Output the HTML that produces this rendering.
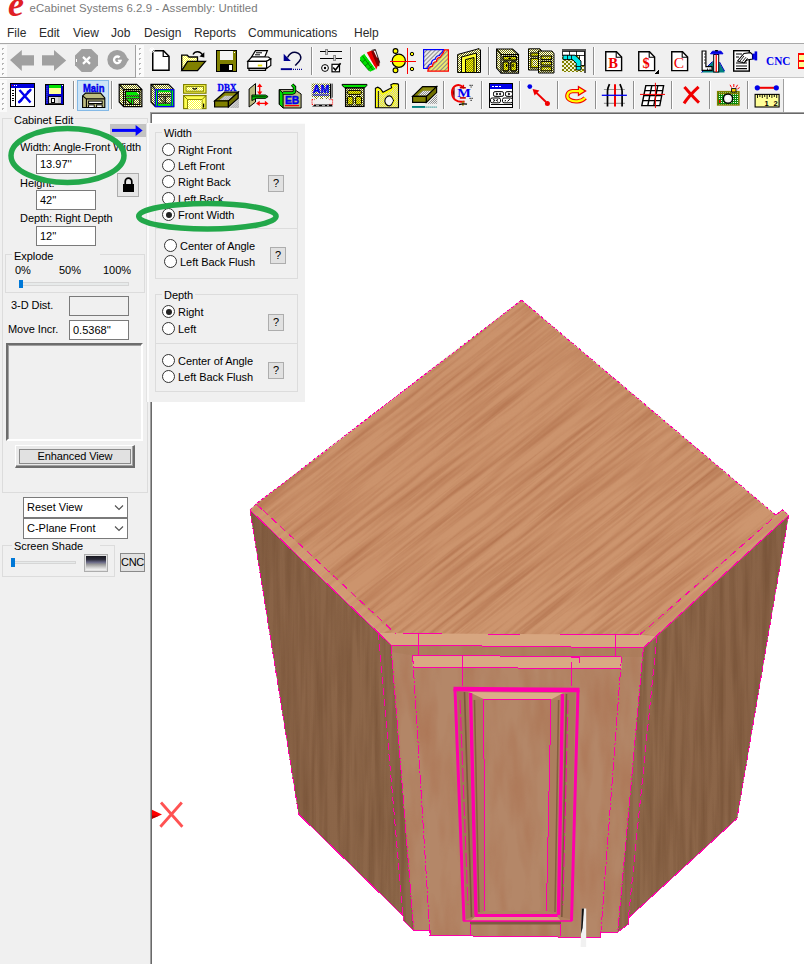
<!DOCTYPE html>
<html><head><meta charset="utf-8">
<style>
*{box-sizing:border-box;margin:0;padding:0}
html,body{width:804px;height:964px;overflow:hidden;background:#fff}
body{position:relative;font-family:"Liberation Sans",sans-serif;font-size:11px;color:#000}
.a{position:absolute}
.t{position:absolute;white-space:nowrap;line-height:14px;font-size:11px;letter-spacing:-0.05px}
.menu{position:absolute;top:25px;font-size:12px;line-height:16px;color:#2b2b2b;white-space:nowrap}
.inp{position:absolute;background:#fff;border:1px solid #7a7a7a;font-size:11px;line-height:19px;padding-left:3px;white-space:nowrap}
.gb{position:absolute;border:1px solid #dcdcdc}
.gl{position:absolute;background:#f0f0f0;padding:0 2px;white-space:nowrap;line-height:14px;font-size:11px;letter-spacing:-0.05px}
.rb{position:absolute;width:13px;height:13px;border:1px solid #333;border-radius:50%;background:#fff}
.rb.on::after{content:"";position:absolute;left:2.5px;top:2.5px;width:6px;height:6px;border-radius:50%;background:#222}
.q{position:absolute;width:16px;height:17px;background:#e1e1e1;border:1px solid #adadad;text-align:center;font-size:11px;line-height:15px}
.sep{position:absolute;width:1px;background:#a0a0a0;border-right:1px solid #fff;width:2px}
.grip{position:absolute;width:3px;border-left:1px dotted #b0b0b0;border-right:1px dotted #fff}
</style></head><body>

<!-- title bar -->
<div class="a" style="left:8px;top:-14px;font-family:'Liberation Serif',serif;font-style:italic;font-weight:bold;font-size:36px;line-height:36px;color:#e01f26">e</div>
<div class="a" style="left:29.5px;top:1px;font-size:11.4px;letter-spacing:0.08px;line-height:15px;color:#7a7a7a;white-space:nowrap">eCabinet Systems 6.2.9 - Assembly: Untitled</div>

<!-- menu -->
<div class="menu" style="left:7px">File</div>
<div class="menu" style="left:39px">Edit</div>
<div class="menu" style="left:73px">View</div>
<div class="menu" style="left:111px">Job</div>
<div class="menu" style="left:144px">Design</div>
<div class="menu" style="left:194px">Reports</div>
<div class="menu" style="left:248px">Communications</div>
<div class="menu" style="left:354px">Help</div>

<!-- toolbars bg -->
<div class="a" id="tb1" style="left:0;top:43px;width:804px;height:35px;background:#f0f0f0;border-top:1px solid #a9a9a9"></div>
<div class="a" id="tb2" style="left:0;top:78px;width:783px;height:35px;background:#f0f0f0;border-top:1px solid #fff"></div>
<div class="a" style="left:0;top:77px;width:804px;height:1px;background:#c6c6c6"></div><div class="a" style="left:0;top:77px;width:136px;height:1px;background:#a0a0a0"></div>

<!-- left panel bg -->
<div class="a" style="left:0;top:112px;width:150px;height:852px;background:#f0f0f0"></div>
<div class="a" style="left:150px;top:112px;width:1px;height:852px;background:#a0a0a0"></div><div class="a" style="left:151px;top:113px;width:1px;height:851px;background:#696969"></div>
<div class="a" style="left:150px;top:112px;width:654px;height:1px;background:#a0a0a0"></div><div class="a" style="left:151px;top:113px;width:653px;height:1px;background:#696969"></div>

<!--ICONS-->
<svg class="a" style="left:0;top:43px" width="804" height="71" viewBox="0 43 804 71" shape-rendering="crispEdges">
<defs>
<pattern id="pY" width="2" height="2" patternUnits="userSpaceOnUse"><rect width="2" height="2" fill="#ffff4d"/><rect width="1" height="1" fill="#55550a"/><rect x="1" y="1" width="1" height="1" fill="#55550a"/></pattern>
<pattern id="pYl" width="2" height="2" patternUnits="userSpaceOnUse"><rect width="2" height="2" fill="#ffff30"/><rect width="1" height="1" fill="#fff"/><rect x="1" y="1" width="1" height="1" fill="#fff"/></pattern>
<pattern id="pYg" width="2" height="2" patternUnits="userSpaceOnUse"><rect width="2" height="2" fill="#ffff00"/><rect width="1" height="1" fill="#d0d0d0"/><rect x="1" y="1" width="1" height="1" fill="#d0d0d0"/></pattern>
<pattern id="pYd" width="2" height="2" patternUnits="userSpaceOnUse"><rect width="2" height="2" fill="#ffff00"/><rect width="1" height="1" fill="#808000"/><rect x="1" y="1" width="1" height="1" fill="#808000"/></pattern>
<pattern id="pG" width="2" height="2" patternUnits="userSpaceOnUse"><rect width="2" height="2" fill="#f0f0f0"/><rect width="1" height="1" fill="#909090"/><rect x="1" y="1" width="1" height="1" fill="#909090"/></pattern>
<pattern id="pB" width="2" height="2" patternUnits="userSpaceOnUse"><rect width="2" height="2" fill="#0000c8"/><rect width="1" height="1" fill="#7a7aff"/></pattern>
<pattern id="pK" width="2" height="2" patternUnits="userSpaceOnUse"><rect width="2" height="2" fill="#ffffff"/><rect width="1" height="1" fill="#787800"/><rect x="1" y="1" width="1" height="1" fill="#787800"/></pattern>
<pattern id="pH" width="3" height="3" patternUnits="userSpaceOnUse" patternTransform="rotate(-45)"><rect width="3" height="3" fill="#e8e8e8"/><rect width="3" height="1" fill="#8a8a8a"/></pattern>
<pattern id="pHy" width="3" height="3" patternUnits="userSpaceOnUse" patternTransform="rotate(-45)"><rect width="3" height="3" fill="#eaea70"/><rect width="3" height="1" fill="#8a8a8a"/></pattern>
<pattern id="pCk" width="4" height="4" patternUnits="userSpaceOnUse"><rect width="4" height="4" fill="#f4f4d8"/><rect width="2" height="2" fill="#808000"/><rect x="2" y="2" width="2" height="2" fill="#808000"/></pattern>
<pattern id="pGr" width="2" height="2" patternUnits="userSpaceOnUse"><rect width="2" height="2" fill="#0a8a0a"/><rect width="1" height="1" fill="#e8ffe8"/></pattern>
</defs>
<rect x="0" y="45" width="7" height="32" fill="#fafafa"/><rect x="2" y="48" width="2" height="2" fill="#b4b4b4"/><rect x="3" y="49" width="1" height="1" fill="#fff"/><rect x="2" y="53" width="2" height="2" fill="#b4b4b4"/><rect x="3" y="54" width="1" height="1" fill="#fff"/><rect x="2" y="58" width="2" height="2" fill="#b4b4b4"/><rect x="3" y="59" width="1" height="1" fill="#fff"/><rect x="2" y="63" width="2" height="2" fill="#b4b4b4"/><rect x="3" y="64" width="1" height="1" fill="#fff"/><rect x="2" y="68" width="2" height="2" fill="#b4b4b4"/><rect x="3" y="69" width="1" height="1" fill="#fff"/><rect x="2" y="73" width="2" height="2" fill="#b4b4b4"/><rect x="3" y="74" width="1" height="1" fill="#fff"/>
<g transform="translate(10,50)"><polygon points="0,10 11.8,0 11.8,5.2 24,5.2 24,15.6 11.8,15.6 11.8,20.9" fill="#a0a0a0" shape-rendering="auto"/></g>
<g transform="translate(42,50)"><polygon points="0,5.2 12,5.2 12,0 24.2,10.4 12,20.9 12,15.6 0,15.6" fill="#a0a0a0" shape-rendering="auto"/></g>
<g transform="translate(86.5,60.4)"><polygon points="-4.8,-11.5 4.8,-11.5 11.5,-4.8 11.5,4.8 4.8,11.5 -4.8,11.5 -11.5,4.8 -11.5,-4.8" fill="#a0a0a0" shape-rendering="auto"/><path d="M-3.5,-3.5L3.5,3.5M3.5,-3.5L-3.5,3.5" stroke="#fff" stroke-width="2.2" shape-rendering="auto"/><rect x="-10.5" y="-1" width="1" height="3" fill="#fff"/></g>
<g transform="translate(117.2,59.8)"><g shape-rendering="auto"><circle r="9.9" fill="#a0a0a0"/><polygon points="5,-7 11.8,-0.4 5.6,8" fill="#a0a0a0"/><path d="M2.4,-2.4A3.3,3.3 0 1 0 3.2,1.2" stroke="#fff" stroke-width="2.3" fill="none"/><path d="M0.6,0.6H4.6" stroke="#fff" stroke-width="1.5"/></g></g>
<rect x="136" y="45" width="8" height="32" fill="#fbfbfb"/><rect x="135" y="45" width="1" height="32" fill="#a0a0a0"/><rect x="139" y="48" width="2" height="2" fill="#b4b4b4"/><rect x="140" y="49" width="1" height="1" fill="#fff"/><rect x="139" y="53" width="2" height="2" fill="#b4b4b4"/><rect x="140" y="54" width="1" height="1" fill="#fff"/><rect x="139" y="58" width="2" height="2" fill="#b4b4b4"/><rect x="140" y="59" width="1" height="1" fill="#fff"/><rect x="139" y="63" width="2" height="2" fill="#b4b4b4"/><rect x="140" y="64" width="1" height="1" fill="#fff"/><rect x="139" y="68" width="2" height="2" fill="#b4b4b4"/><rect x="140" y="69" width="1" height="1" fill="#fff"/><rect x="139" y="73" width="2" height="2" fill="#b4b4b4"/><rect x="140" y="74" width="1" height="1" fill="#fff"/>
<g transform="translate(152,50)"><path d="M0.75,0.75H11.5L17,6.2V20.2H0.75Z" fill="#fff" stroke="#000" stroke-width="1.5" shape-rendering="auto"/><path d="M11.2,1V6.5H16.8" fill="none" stroke="#000" stroke-width="1.2" shape-rendering="auto"/><path d="M-3,0H3M0,-3V3M-2,-2L2,2M-2,2L2,-2" stroke="#fff" stroke-width="1" shape-rendering="auto"/></g>
<g transform="translate(181,50)"><g shape-rendering="auto"><path d="M0.7,20.5V5.2H6.2L8,7H16.5V11.3" fill="url(#pYl)" stroke="#000" stroke-width="1.3"/><polygon points="0.7,20.6 6.6,11.3 24.4,11.3 16.5,20.6" fill="#808000" stroke="#000" stroke-width="1.3"/><path d="M12,4.5C14,0.8 19,0.5 21.8,5.2" fill="none" stroke="#000" stroke-width="1.4"/><polygon points="23.3,2.3 23.3,7.6 18.4,6.6" fill="#000"/></g></g>
<g transform="translate(216,50)"><rect x="0.5" y="0.5" width="19.5" height="20.5" fill="#808000" stroke="#000" stroke-width="1"/><rect x="4" y="1" width="12.5" height="9" fill="#f4f4f4"/><rect x="4.3" y="14" width="12.2" height="6.6" fill="#000"/><rect x="13" y="14.6" width="2.6" height="5" fill="#fff"/><rect x="18" y="1.5" width="1.2" height="1.5" fill="#fff"/></g>
<g transform="translate(247,50)"><g shape-rendering="auto" stroke="#000" stroke-width="1.2"><polygon points="8.5,0.6 20.4,0.6 17.8,7 4.6,7" fill="#fff"/><path d="M9,2.8H15M8,4.8H13" stroke-width="1"/><polygon points="0.8,11.3 4.6,7 21.5,7 23.8,9 19.6,11.3" fill="#fff"/><polygon points="0.8,11.3 19.6,11.3 19.6,18.4 0.8,18.4" fill="#fff"/><polygon points="19.6,11.3 23.8,9 23.8,15.5 19.6,18.4" fill="#fff"/><polygon points="2,18.4 18.5,18.4 18.5,20.4 2,20.4" fill="#fff"/><rect x="10.8" y="14.6" width="4.4" height="1.8" fill="#e8e000" stroke="none"/></g></g>
<g transform="translate(276,46)"><g shape-rendering="auto"><polygon points="7.7,7.8 7.7,15 14.8,15" fill="#000090"/><path d="M11.5,11.5C13.5,7.5 17,5.8 20.2,6.4C23.6,7.2 25.4,10 24.6,13C23.6,15.4 21,17.6 19.2,19.6" fill="none" stroke="#00003c" stroke-width="1.5"/><rect x="4.8" y="22.2" width="11.3" height="1.9" fill="#000090"/><path d="M17,23.4H26" stroke="#000090" stroke-width="1.2" stroke-dasharray="1 1"/></g></g>
<rect x="311" y="47" width="1" height="28" fill="#8f8f8f"/><rect x="312" y="47" width="1" height="28" fill="#fff"/>
<g transform="translate(320,49)"><rect x="0" y="2" width="22" height="1" fill="#000"/><rect x="0" y="8.5" width="22" height="1" fill="#000"/><rect x="5.5" y="0" width="2" height="5.4" fill="#d0d0d0" stroke="#555" stroke-width=".6"/><rect x="13.8" y="6" width="2" height="5.4" fill="#d0d0d0" stroke="#555" stroke-width=".6"/><g shape-rendering="auto"><circle cx="5" cy="19" r="3.4" fill="#fff" stroke="#000" stroke-width="1"/><circle cx="5" cy="19" r="1.2" fill="#000"/><rect x="12" y="15.3" width="7.5" height="7.5" fill="#fff" stroke="#000" stroke-width="1.2"/><path d="M13.2,18.6L15.4,21L20.6,14.2" stroke="#000" stroke-width="1.5" fill="none"/></g></g>
<rect x="350" y="47" width="1" height="28" fill="#8f8f8f"/><rect x="351" y="47" width="1" height="28" fill="#fff"/>
<g transform="translate(354,46)"><g shape-rendering="auto"><polygon points="6.1,11.3 10.4,7.8 21.8,23 16.1,25.7 6.1,14.4" fill="#00e000"/><path d="M8.2,9.6L19,24.3M6.1,14L15,24.8M8,16.6L11.5,13.5M11,20L15,16.6M14,23.4L18.4,19.8" stroke="#007000" stroke-width=".8"/><polygon points="12.8,6.4 17.6,4.4 24,19.4 22.2,23.4" fill="#f00000"/><polygon points="17.2,5.4 21.3,3.5 25.7,16.5 25.2,20.5 22.8,19.2" fill="#800000"/><polygon points="19.6,4.8 21.8,4.4 24,11.3 23,11.7" fill="#fff"/><path d="M11,8L21.4,22.4" stroke="#fff" stroke-width=".9"/><path d="M17.6,4.4L21.3,3.5L25.7,16.5" stroke="#000" stroke-width=".8" fill="none"/></g></g>
<g transform="translate(385,43)"><g shape-rendering="auto"><circle cx="13.8" cy="17.8" r="6.6" fill="#ffff00" stroke="#000" stroke-width="1.2"/><circle cx="10.5" cy="8" r="2.4" fill="#ffff00" stroke="#000" stroke-width="1.1"/><circle cx="10.5" cy="27.3" r="2.4" fill="#ffff00" stroke="#000" stroke-width="1.1"/><circle cx="27" cy="11" r="1.7" fill="#ffff00" stroke="#000" stroke-width="1"/><circle cx="27" cy="26" r="1.7" fill="#ffff00" stroke="#000" stroke-width="1"/></g><rect x="5" y="17.5" width="26" height="1" fill="#f00"/><rect x="22" y="5" width="1" height="26" fill="#f00"/></g>
<g transform="translate(423,49)"><g shape-rendering="auto"><path d="M0.6,0.6H20.5C20.5,4 17,4 16.5,6.5C13,6.5 12.5,9 12,10.5C9,10.5 8.5,13.5 8.5,15C5.5,15 5,18 4.5,19.5H0.6Z" fill="url(#pH)" stroke="#0000ff" stroke-width="1.2"/><path d="M25.4,0.8V22.2H4.8C5,20 6,17.5 9.5,17.2C9.5,15 10.5,12.8 13.5,12.5C13.5,10 15,8.5 17.5,8.2C17.8,5.5 20.5,5.5 21.5,0.8Z" fill="url(#pHy)" stroke="#f00" stroke-width="1.2"/></g></g>
<g transform="translate(457,48)"><g shape-rendering="auto"><polygon points="0.6,6.5 19,1.5 22,0.5 23.5,2 23.5,24.5 0.6,24.5" fill="url(#pK)" stroke="#000" stroke-width="1"/><polygon points="4.5,24.5 4.5,9 19.5,5 19.5,24.5" fill="#ffff30" stroke="#000" stroke-width="1"/><polygon points="8.5,24.5 8.5,11.6 17,9.5 17,24.5" fill="url(#pYd)" stroke="#000" stroke-width="1"/></g></g>
<rect x="488" y="47" width="1" height="28" fill="#8f8f8f"/><rect x="489" y="47" width="1" height="28" fill="#fff"/>
<g transform="translate(496,48)"><g shape-rendering="auto"><polygon points="0.6,1 16.5,1 22.5,6.5 22.5,25 5,25 0.6,20" fill="url(#pK)" stroke="#000" stroke-width="1.1"/><polygon points="5,6.5 22.5,6.5 22.5,25 5,25" fill="url(#pK)" stroke="#000" stroke-width="1.1"/><path d="M0.6,1L5,6.5" stroke="#000" stroke-width="1.1"/><rect x="7" y="8.4" width="13.6" height="3.8" rx="1" fill="url(#pYd)" stroke="#000" stroke-width="1.3"/><rect x="7" y="13.8" width="5.8" height="9.2" rx="1.2" fill="url(#pYd)" stroke="#000" stroke-width="1.3"/><rect x="14.8" y="13.8" width="5.8" height="9.2" rx="1.2" fill="url(#pYd)" stroke="#000" stroke-width="1.3"/><path d="M12.4,10.3H15.2M10.6,16V19M17,16V19" stroke="#000" stroke-width="1.2"/></g></g>
<g transform="translate(528,48)"><g shape-rendering="auto"><polygon points="0.5,0.8 12,0.8 14,3.5 14,22 0.5,22" fill="url(#pK)" stroke="#000" stroke-width="1"/><rect x="2.8" y="5" width="8.4" height="3.2" fill="url(#pYd)" stroke="#000" stroke-width="1"/><rect x="2.8" y="10.3" width="8.4" height="9.5" fill="url(#pYd)" stroke="#000" stroke-width="1"/><rect x="4.6" y="12" width="4.8" height="6" fill="url(#pK)"/><polygon points="10.5,3 24,3 26,5.6 26,25 10.5,25" fill="url(#pK)" stroke="#000" stroke-width="1"/><rect x="13" y="8" width="10.6" height="3.6" fill="url(#pYd)" stroke="#000" stroke-width="1"/><rect x="13" y="13.4" width="10.6" height="3.6" fill="url(#pYd)" stroke="#000" stroke-width="1"/><rect x="13" y="18.8" width="10.6" height="4" fill="url(#pYd)" stroke="#000" stroke-width="1"/><rect x="15.5" y="9.2" width="5.6" height="1.2" fill="url(#pK)"/><rect x="15.5" y="14.6" width="5.6" height="1.2" fill="url(#pK)"/><rect x="15.5" y="20.2" width="5.6" height="1.2" fill="url(#pK)"/></g></g>
<g transform="translate(562,49)"><rect x="0" y="2" width="23" height="21" fill="url(#pCk)"/><rect x="0" y="0" width="24" height="2" fill="#555"/><rect x="22" y="0" width="2" height="23.5" fill="#555"/><rect x="0" y="2" width="22" height="4" fill="#fff" stroke="#000" stroke-width=".8"/><path d="M7,2V6M14,2V6" stroke="#000" stroke-width=".8"/><rect x="17.5" y="6" width="4.5" height="10" fill="#fff" stroke="#000" stroke-width=".8"/><path d="M1,6.2H13L19,12V21H14.2V14.2L10.5,10.6H1Z" fill="#00e8e8" stroke="#000" stroke-width=".9" shape-rendering="auto"/><path d="M5,6.2V10.6M9,6.2V10.6M14.2,17.5H19" stroke="#000" stroke-width=".8"/></g>
<rect x="593" y="47" width="1" height="28" fill="#8f8f8f"/><rect x="594" y="47" width="1" height="28" fill="#fff"/>
<g transform="translate(605,51)"><path d="M0.75,0.75H11.5L16.6,6V19.6H0.75Z" fill="#fff" stroke="#000" stroke-width="1.4" shape-rendering="auto"/><path d="M11.2,1V6.3H16.4" fill="none" stroke="#000" stroke-width="1.1" shape-rendering="auto"/><text x="8.2" y="17" font-family="Liberation Serif" font-weight="bold" font-size="14.5" fill="#f00000" text-anchor="middle" shape-rendering="auto">B</text></g>
<g transform="translate(638,51)"><path d="M0.75,0.75H11.5L16.6,6V19.6H0.75Z" fill="#fff" stroke="#000" stroke-width="1.4" shape-rendering="auto"/><path d="M11.2,1V6.3H16.4" fill="none" stroke="#000" stroke-width="1.1" shape-rendering="auto"/><text x="8.2" y="17" font-family="Liberation Serif" font-weight="bold" font-size="14.5" fill="#f00000" text-anchor="middle" shape-rendering="auto">$</text><polygon points="21,18.5 21,22.5 17,22.5" fill="#000"/></g>
<g transform="translate(671,51)"><path d="M0.75,0.75H11.5L16.6,6V19.6H0.75Z" fill="#fff" stroke="#000" stroke-width="1.4" shape-rendering="auto"/><path d="M11.2,1V6.3H16.4" fill="none" stroke="#000" stroke-width="1.1" shape-rendering="auto"/><text x="7.799999999999999" y="17" font-family="Liberation Serif" font-weight="normal" font-size="15.5" fill="#f00000" text-anchor="middle" shape-rendering="auto">C</text></g>
<g transform="translate(700.5,49)"><g shape-rendering="auto"><polygon points="1,23.5 24,23.5 24,22 15.5,8.5 12,13 8,17" fill="#008080"/><path d="M1,23.5L12,12.5M24,22L19,13" stroke="#0000c0" stroke-width="1"/><path d="M1.6,2V21.4H11.5V17.6H5.4V2Z" fill="#fff" stroke="#000" stroke-width="1.2"/><path d="M3.5,5H5M3.5,8H5M3.5,11H5M3.5,14H5M7,19.5V21M9.5,19.5V21" stroke="#000" stroke-width=".8"/><rect x="13.2" y="5.5" width="5" height="17.5" fill="#fff" stroke="#000" stroke-width="1"/><rect x="15.1" y="5.5" width="1.3" height="17.5" fill="#f00"/><path d="M10,4.8H22.5L20.5,2.2H12Z" fill="#0000e0" stroke="#0000e0" stroke-width="1"/><path d="M14.6,1H17.4V2.4H14.6Z" fill="#000"/></g></g>
<g transform="translate(733,50)"><g shape-rendering="auto"><rect x="0.7" y="0.7" width="15.6" height="20.4" fill="#fff" stroke="#000" stroke-width="1.4"/><path d="M3,4H9M3,7H6M3,13H14M3,16H14M3,18.6H14" stroke="#000" stroke-width="1.1"/><path d="M4.5,11L11,3.5L17.5,2.6L19.5,4.5V9L14,10L11,13Z" fill="#fff" stroke="#000" stroke-width="1.1"/><path d="M7,11L11,6M9.5,11.5L13,7.2M12,11.4L14.6,8.2" stroke="#000" stroke-width=".9"/><rect x="19.5" y="3.6" width="2.4" height="6" fill="#0000e0"/><rect x="21.6" y="1.4" width="2.6" height="9" fill="#0000e0"/></g></g>
<text x="766" y="65" font-family="Liberation Serif" font-weight="bold" font-size="13.3" fill="#0000f0" shape-rendering="auto" textLength="24.4" lengthAdjust="spacingAndGlyphs">CNC</text>
<g transform="translate(798,53.5)"><rect x="0.6" y="0.6" width="8" height="14" fill="url(#pYl)" stroke="#f00" stroke-width="1.3"/><path d="M0.6,7.5H8" stroke="#f00" stroke-width="1.2"/></g>
<rect x="0" y="80" width="7" height="32" fill="#fafafa"/><rect x="2" y="83" width="2" height="2" fill="#b4b4b4"/><rect x="3" y="84" width="1" height="1" fill="#fff"/><rect x="2" y="88" width="2" height="2" fill="#b4b4b4"/><rect x="3" y="89" width="1" height="1" fill="#fff"/><rect x="2" y="93" width="2" height="2" fill="#b4b4b4"/><rect x="3" y="94" width="1" height="1" fill="#fff"/><rect x="2" y="98" width="2" height="2" fill="#b4b4b4"/><rect x="3" y="99" width="1" height="1" fill="#fff"/><rect x="2" y="103" width="2" height="2" fill="#b4b4b4"/><rect x="3" y="104" width="1" height="1" fill="#fff"/><rect x="2" y="108" width="2" height="2" fill="#b4b4b4"/><rect x="3" y="109" width="1" height="1" fill="#fff"/>
<g transform="translate(10,83)"><rect x="0.6" y="0.6" width="23.6" height="22.8" fill="#fff" stroke="#000" stroke-width="1.2"/><rect x="1.2" y="1.2" width="22.4" height="3.4" fill="#0000e0"/><rect x="2" y="2" width="1" height="1" fill="#f00"/><rect x="4" y="2" width="1" height="1" fill="#fff"/><rect x="6" y="2" width="1" height="1" fill="#fff"/><rect x="5.4" y="4.6" width="1" height="18.6" fill="#000"/><path d="M1.6,7.5H4.4M1.6,10H4.4M1.6,12.5H4.4M1.6,15H4.4M1.6,17.5H4.4" stroke="#000" stroke-width="1"/><g shape-rendering="auto"><path d="M9.5,7L20.5,19.5M20.8,6.6L8.6,19.6" stroke="#0000f0" stroke-width="2.4" fill="none"/><path d="M17,9C19,8 20,7.5 21.2,6M8.4,19.8C10,19 11,18.5 12,17" stroke="#0000f0" stroke-width="1.6" fill="none"/></g></g>
<g transform="translate(44.5,83.7)"><rect x="0.6" y="0.6" width="18.6" height="20" fill="#0000c8" stroke="#000" stroke-width="1.2"/><rect x="1.2" y="2" width="2" height="17" fill="url(#pB)"/><rect x="4" y="1.2" width="12" height="3.2" fill="#00e000"/><rect x="4" y="4.4" width="12" height="5.8" fill="url(#pYl)"/><rect x="4" y="13" width="12.4" height="7" fill="#d8d8d8" stroke="#000" stroke-width=".8"/><rect x="6.6" y="14.6" width="3.4" height="4.2" fill="#fff" stroke="#000" stroke-width="1"/><rect x="13" y="13.6" width="3" height="6" fill="url(#pG)"/><rect x="17" y="1.4" width="1.6" height="1.2" fill="#fff"/></g>
<rect x="73" y="81" width="1" height="28" fill="#8f8f8f"/><rect x="74" y="81" width="1" height="28" fill="#fff"/>
<rect x="77.5" y="80.5" width="31" height="30" fill="#cce4f7" stroke="#84b9e6" stroke-width="1"/>
<text x="83" y="92.2" font-family="Liberation Sans" font-weight="bold" font-size="11.5" fill="#0000e8" stroke="#0000e8" stroke-width=".45" shape-rendering="auto" textLength="21.5" lengthAdjust="spacingAndGlyphs">Main</text>
<g transform="translate(82,92.5)"><g shape-rendering="auto"><polygon points="0.6,3.4 3.6,0.6 18.6,0.6 22.8,5.4 22.8,15 0.6,15" fill="url(#pK)" stroke="#000" stroke-width="1.1"/><path d="M0.6,3.4L4.4,6.4H22.8M4.4,6.4V15" stroke="#000" stroke-width="1.1" fill="none"/><rect x="6.6" y="8.6" width="13.6" height="2.4" fill="#fff" stroke="#000" stroke-width="1"/><rect x="6.6" y="12.4" width="5.6" height="2.6" fill="#fff" stroke="#000" stroke-width="1"/><rect x="14.6" y="12.4" width="5.6" height="2.6" fill="#fff" stroke="#000" stroke-width="1"/></g></g>
<rect x="111" y="81" width="1" height="28" fill="#8f8f8f"/><rect x="112" y="81" width="1" height="28" fill="#fff"/>
<g transform="translate(116,80)"><g shape-rendering="auto"><polygon points="3.2,4.4 20.7,4.4 25.9,9.6 25.9,26.7 7.6,26.7 3.2,21.9" fill="url(#pK)" stroke="#000" stroke-width="1.2"/><path d="M3.2,4.4L7.6,9.6H25.9M7.6,9.6V26.7" stroke="#000" stroke-width="1.2" fill="none"/><rect x="9.6" y="11.4" width="14.2" height="13" fill="url(#pK)" stroke="#000" stroke-width="1.1"/><polygon points="10.2,12 20.3,12 23.2,15 23.2,15.4 10.2,15.4" fill="#00e800"/><rect x="10.2" y="15.6" width="13" height="1" fill="#000"/><rect x="10.2" y="16.8" width="13" height="1.5" fill="#00e800"/><rect x="10.2" y="18.4" width="13" height="0.9" fill="#000"/><polygon points="10.8,19.2 15.2,19.2 15.2,23.6" fill="#00e800"/><path d="M10.4,19.4L15,24" stroke="#000" stroke-width="1"/><rect x="15.2" y="19.2" width="0.9" height="5" fill="#000"/><rect x="16.1" y="19.2" width="1.2" height="5" fill="#00e800"/><rect x="17.3" y="19.2" width="0.8" height="5" fill="#000"/></g></g>
<g transform="translate(116,80)"><g shape-rendering="auto"><polygon points="35,4.4 52.5,4.4 57.7,9.6 57.7,26.7 39.4,26.7 35,21.9" fill="url(#pK)" stroke="#000" stroke-width="1.2"/><path d="M35,4.4L39.4,9.6" stroke="#000" stroke-width="1.2"/><rect x="39.3" y="9.7" width="18.4" height="16.8" fill="#00e800" stroke="#0000f0" stroke-width="1.2"/><rect x="41.1" y="9.7" width="0.9" height="16.8" fill="#0000f0"/><rect x="54.8" y="9.7" width="0.9" height="16.8" fill="#0000f0"/><rect x="42" y="12.1" width="12.8" height="11.8" fill="url(#pK)"/><path d="M42,14.7H54.8M42,16.7H54.8M42,23.2H54.8" stroke="#000" stroke-width="0.9"/><path d="M48,17V23M49.6,17V23" stroke="#000" stroke-width="0.9"/><path d="M43.6,17.6L46.6,21.6" stroke="#000" stroke-width="1"/></g></g>
<g transform="translate(183,84)"><g shape-rendering="auto"><rect x="0.6" y="0.6" width="22.4" height="8.6" fill="#ffff50" stroke="#808000" stroke-width="1.2"/><rect x="3" y="2.6" width="17.6" height="4.6" fill="url(#pYl)" stroke="#808000" stroke-width="1"/><path d="M9.5,4Q11.8,6.2 14,4" fill="none" stroke="#000" stroke-width="1.1"/><rect x="0.6" y="11.6" width="22.4" height="13" fill="#ffff50" stroke="#808000" stroke-width="1.2"/><path d="M0.6,11.6L4.6,15.6H19L23,11.6M4.6,15.6V24.6M19,15.6V24.6" fill="none" stroke="#808000" stroke-width="1"/><rect x="5" y="16" width="13.6" height="9" fill="url(#pYl)"/><rect x="20" y="19.6" width="1.2" height="4" fill="#000"/></g></g>
<g transform="translate(214,84)"><text x="3.6" y="7.2" font-family="Liberation Serif" font-weight="bold" font-size="9.6" fill="#0000f0" stroke="#0000f0" stroke-width=".35" shape-rendering="auto" textLength="18.8" lengthAdjust="spacingAndGlyphs">DBX</text><g shape-rendering="auto" transform="translate(0,3.6)"><polygon points="15,20.4 25,20.4 25,11 20,16" fill="url(#pG)"/><polygon points="0.6,13.4 10.6,4.6 24.2,4.6 14.4,13.4" fill="#808000" stroke="#000" stroke-width="1.2"/><polygon points="11,8 20,8 15.4,12.4 5.5,12.4" fill="url(#pG)"/><polygon points="11.2,6 22.2,6 20,8 11.2,8" fill="#8c8c10"/><polygon points="0.6,13.4 14.4,13.4 14.4,19.4 0.6,19.4" fill="#808000" stroke="#000" stroke-width="1.2"/><polygon points="14.4,13.4 24.2,4.6 24.2,10.6 14.4,19.4" fill="#707000" stroke="#000" stroke-width="1.2"/></g></g>
<g transform="translate(248.5,83)"><g shape-rendering="auto"><polygon points="0.6,6 7,0.6 7,19 0.6,24" fill="url(#pK)" stroke="#000" stroke-width="1"/><polygon points="3.4,12 17,12 19.6,13.6 17,15.4 7.6,15.4 3.4,17.6" fill="#00d800" stroke="#000" stroke-width=".9"/><path d="M3.4,13.8H18" stroke="#000" stroke-width=".8"/><path d="M11.2,2.4V11" stroke="#f00" stroke-width="1.3"/><polygon points="11.2,0.4 8.6,4 13.8,4" fill="#f00"/><polygon points="11.2,12 8.6,8.6 13.8,8.6" fill="#f00"/><path d="M9.4,20.4H18" stroke="#f00" stroke-width="1.3"/><polygon points="7.6,20.4 11.2,17.8 11.2,23" fill="#f00"/><polygon points="20,20.4 16.4,17.8 16.4,23" fill="#f00"/></g></g>
<g transform="translate(278.5,83)"><g shape-rendering="auto"><polygon points="0.8,6.6 16,6.6 22.6,11 22.6,25 4.6,25 0.8,21.4" fill="url(#pK)" stroke="#000" stroke-width="1"/><polygon points="0.8,6.6 4.6,10 4.6,25 0.8,21.4" fill="#00d800" stroke="#000" stroke-width="1"/><path d="M4.6,10H14C15.4,10 16,9 16,7.6V4L13.6,1.6" fill="none" stroke="#000" stroke-width="3.4"/><path d="M4.6,10H14C15.4,10 16,9 16,7.6V4L13.6,1.6" fill="none" stroke="#00d800" stroke-width="1.8"/><text x="6.4" y="20.8" font-family="Liberation Sans" font-weight="bold" font-size="11" fill="#0000f0" stroke="#0000f0" stroke-width=".4" textLength="14.4" lengthAdjust="spacingAndGlyphs">EB</text><path d="M6.4,22.6H20.6" stroke="#f00" stroke-width="1.2"/></g></g>
<g transform="translate(311,83)"><g shape-rendering="auto"><polygon points="0.6,0.6 20,0.6 20,14 17.4,14 17.4,16 14.6,16 14.6,14 12,14 12,16 9.2,16 9.2,14 6.6,14 6.6,16 3.8,16 3.8,14 0.6,14" fill="url(#pK)"/><rect x="19" y="0.6" width="1.4" height="15" fill="#000"/><rect x="21" y="0.6" width="1" height="14" fill="#666"/><text x="1.8" y="10.4" font-family="Liberation Sans" font-weight="bold" font-size="10.6" fill="#0000f0" stroke="#0000f0" stroke-width=".4" textLength="16.4" lengthAdjust="spacingAndGlyphs">AM</text><path d="M1.6,12H18" stroke="#0000f0" stroke-width="1"/><path d="M1,16.6H3.6M1,16.6V21.4M1,21.4H3.6M18.4,16.6H21.6M21.6,16.6V21.4M18.4,21.4H21.6" stroke="#f00" stroke-width="1" stroke-dasharray="1 1" fill="none"/><polygon points="1,23.6 4,21.6 21,21.6 21.6,23.6" fill="#000"/><path d="M5,22.6H8M11,22.6H14M16,22.6H18" stroke="#ddd" stroke-width=".8"/></g></g>
<g transform="translate(336,80)"><g shape-rendering="auto"><polygon points="6.1,4.4 30.9,4.4 30.9,5.4 28.7,7.8 8.7,7.8 6.1,5.4" fill="#00e000" stroke="#000" stroke-width="1"/><rect x="9.6" y="8" width="18.4" height="18.4" fill="url(#pK)" stroke="#000" stroke-width="1.3"/><rect x="11.7" y="10.4" width="13.6" height="4" rx=".8" fill="url(#pYd)" stroke="#000" stroke-width="1"/><rect x="11.4" y="16.5" width="5.7" height="8.3" rx="1.4" fill="url(#pYd)" stroke="#000" stroke-width="1"/><rect x="19.6" y="16.5" width="5.9" height="8.3" rx="1.4" fill="url(#pYd)" stroke="#000" stroke-width="1"/></g></g>
<g transform="translate(336,80)"><g shape-rendering="auto"><polygon points="39.4,8.3 41.8,7.2 44.4,8.7 47,12.2 52.2,9.6 55.7,7.8 54.8,4.8 57.4,3.5 61.8,3.9 62.5,4.8 62.5,27.7 39.4,27.7" fill="url(#pYg)"/><path d="M40.4,9.4L42,8.6L44,10L46.8,13.6L52.6,10.8L56.8,8.6L56,5.6L57.8,4.8L61.4,5" fill="none" stroke="#ffff00" stroke-width="1.9"/><path d="M40.6,9V27.7" stroke="#ffff00" stroke-width="1.6"/><polygon points="39.4,8.3 41.8,7.2 44.4,8.7 47,12.2 52.2,9.6 55.7,7.8 54.8,4.8 57.4,3.5 61.8,3.9 62.5,4.8 62.5,27.7 39.4,27.7" fill="none" stroke="#000" stroke-width="1.1"/><path d="M42.4,11V27.7" stroke="#000" stroke-width=".9"/><path d="M51.4,16.4L53.6,15.8L55.4,16.8L56.6,18L57.6,20.6L56.8,22.6L55.6,24.6L53.4,26L51.4,25.4L49.6,23.6L48.8,21.2L49.4,18.4Z" fill="#f4f4f4" stroke="#000" stroke-width="1.1"/><path d="M55.4,16.8L56.6,18L57.6,20.6L56.8,22.6L55.6,24.6" stroke="#ffff00" stroke-width="1" fill="none" transform="translate(.9,0)"/></g></g>
<rect x="405" y="81" width="1" height="28" fill="#8f8f8f"/><rect x="406" y="81" width="1" height="28" fill="#fff"/>
<g transform="translate(412,83)"><g shape-rendering="auto"><polygon points="15,20.8 25.2,20.8 25.2,11 20,16" fill="url(#pG)"/><polygon points="0.6,13.4 10.6,3.6 24.6,3.6 14.4,13.4" fill="#808000" stroke="#000" stroke-width="1.2"/><polygon points="11,7.4 20.4,7.4 15.4,12.4 5.5,12.4" fill="url(#pG)"/><polygon points="11.2,5 22.6,5 20.4,7.4 11.2,7.4" fill="#8c8c10"/><polygon points="0.6,13.4 14.4,13.4 14.4,19.4 0.6,19.4" fill="#808000" stroke="#000" stroke-width="1.2"/><polygon points="14.4,13.4 24.6,3.6 24.6,9.6 14.4,19.4" fill="#707000" stroke="#000" stroke-width="1.2"/><rect x="0" y="23" width="13" height="1.9" fill="#008080"/><path d="M13.6,24.2H25.4" stroke="#008080" stroke-width="1.3" stroke-dasharray="1 1"/></g></g>
<rect x="443" y="81" width="1" height="28" fill="#8f8f8f"/><rect x="444" y="81" width="1" height="28" fill="#fff"/>
<g transform="translate(408,80)"><g shape-rendering="auto"><path d="M55,7.2C50.5,2.6 44,6 44,12.4C44,19 49,23 56.6,21.4" fill="none" stroke="#f00000" stroke-width="2"/><path d="M46.6,7.6C44.4,10 44.4,15.4 46.6,18.4L46.6,7.6" fill="#800000"/><path d="M55.4,4.8V8.6" stroke="#f00000" stroke-width="1.4"/><rect x="51.8" y="7" width="6" height="1.5" fill="#c00000"/><rect x="51.8" y="17.1" width="6" height="1.6" fill="#c00000"/><text x="49.2" y="16.9" font-family="Liberation Serif" font-weight="bold" font-size="12.6" fill="#0000f0" textLength="13.6" lengthAdjust="spacingAndGlyphs">M</text><rect x="54.2" y="21.4" width="1.5" height="4.4" fill="#a09000"/><path d="M51,24.6Q55,23.4 59,24.2" stroke="#000" stroke-width="1.3" fill="none"/><path d="M61.6,5.4H64.6M62.6,7H64.6M61.6,18.4H64.6M62.6,20.4H64.6" stroke="#000" stroke-width="1.1" stroke-dasharray="1 1"/></g></g>
<rect x="481" y="81" width="1" height="28" fill="#8f8f8f"/><rect x="482" y="81" width="1" height="28" fill="#fff"/>
<g transform="translate(488.5,83)"><rect x="0.6" y="0.6" width="23.6" height="23.6" fill="#fff" stroke="#000" stroke-width="1.2"/><rect x="1.4" y="1.4" width="22" height="4.6" fill="#0000e8"/><path d="M3,3.6H5M6,3.6H9M10,3.6H12" stroke="#fff" stroke-width="1.4"/><g shape-rendering="auto"><rect x="5" y="8.6" width="10" height="4.8" rx="1.6" fill="#fff" stroke="#000" stroke-width="1"/><rect x="17" y="8.6" width="7" height="4.8" rx="1.6" fill="#fff" stroke="#000" stroke-width="1"/><rect x="2" y="15" width="10" height="4.8" rx="1.6" fill="#fff" stroke="#000" stroke-width="1"/><rect x="14" y="15" width="10" height="4.8" rx="1.6" fill="#fff" stroke="#000" stroke-width="1"/><path d="M7.4,10L9.4,11L7.4,12M12.6,10L10.6,11L12.6,12M19.4,10L21.4,11L19.4,12M4.6,16.4L6.6,17.4L4.6,18.4M9.6,16.4L7.8,17.4L9.6,18.4M16.6,18.4L17,17M19,18.4L21.4,16.2" stroke="#000" stroke-width="1" fill="none"/></g><rect x="2" y="21" width="21" height="1.4" fill="#000"/></g>
<rect x="519" y="81" width="1" height="28" fill="#8f8f8f"/><rect x="520" y="81" width="1" height="28" fill="#fff"/>
<g transform="translate(527,83)"><g shape-rendering="auto"><circle cx="2.8" cy="3.6" r="2.4" fill="#0000e8"/><circle cx="20.4" cy="20.4" r="2.5" fill="#f00000"/><path d="M19,19L9,9.4" stroke="#f00000" stroke-width="2"/><polygon points="5.6,6 12.4,7.6 7.6,12.6" fill="#f00000"/></g></g>
<rect x="557" y="81" width="1" height="28" fill="#8f8f8f"/><rect x="558" y="81" width="1" height="28" fill="#fff"/>
<g transform="translate(566,85)"><g shape-rendering="auto"><path d="M13,6.1H6.4C1,6.6 -0.2,12 3.4,14.6C7.4,17.4 15.4,17.2 19.2,12.8" fill="none" stroke="#f00000" stroke-width="4.3"/><polygon points="11.8,0.4 20.8,6.1 11.8,11.4" fill="#f00000"/><path d="M13,6.1H6.4C1,6.6 -0.2,12 3.4,14.6C7.4,17.4 15.4,17.2 19.2,12.8" fill="none" stroke="#ffff00" stroke-width="2.2"/><polygon points="13,2.8 18.4,6.1 13,9.2" fill="#ffff00"/></g></g>
<rect x="595" y="81" width="1" height="28" fill="#8f8f8f"/><rect x="596" y="81" width="1" height="28" fill="#fff"/>
<g transform="translate(601.5,83)"><g shape-rendering="auto"><path d="M2.4,6.5H23.4M2.4,20.4H23.4" stroke="#999" stroke-width="1.1"/><path d="M8,1.2C7,3.4 6,5 6,8V23.5M18.4,1.2C19.4,3.4 20.6,5 20.6,8V23.5" stroke="#000" stroke-width="1.7" fill="none"/><path d="M13.5,1.2V23.5" stroke="#f00000" stroke-width="2"/><path d="M0.3,12.3H25.4" stroke="#0000f0" stroke-width="1.3"/></g></g>
<rect x="633" y="81" width="1" height="28" fill="#8f8f8f"/><rect x="634" y="81" width="1" height="28" fill="#fff"/>
<g transform="translate(641,83)"><g shape-rendering="auto"><polygon points="4.8,2.6 22.6,2.6 18.8,22.6 0.8,22.6" fill="#fff" stroke="#000" stroke-width="1.4"/><path d="M3.8,7.6H21.6M2.8,12.6H20.6M1.8,17.6H19.6M10.8,2.6L6.8,22.6M16.8,2.6L12.8,22.6" stroke="#000" stroke-width="1.4" fill="none"/><path d="M-1,11.4H24M14.4,-0.2V25" stroke="#f00000" stroke-width="1"/></g></g>
<rect x="671" y="81" width="1" height="28" fill="#8f8f8f"/><rect x="672" y="81" width="1" height="28" fill="#fff"/>
<g transform="translate(683,86)"><g shape-rendering="auto"><path d="M1.4,1C6,6 11,12 16,16.6M15.6,0.8C11,5 5,11 1,17.4" stroke="#f00000" stroke-width="3" fill="none"/></g></g>
<rect x="709" y="81" width="1" height="28" fill="#8f8f8f"/><rect x="710" y="81" width="1" height="28" fill="#fff"/>
<g transform="translate(717,84)"><g shape-rendering="auto"><rect x="0.6" y="7.6" width="21.4" height="13.4" fill="url(#pGr)" stroke="#808000" stroke-width="1.4"/><rect x="1.6" y="8.6" width="19.4" height="1.6" fill="#808000"/><circle cx="11" cy="14.6" r="4.6" fill="#f4f4f4" stroke="#000" stroke-width="1.4"/><circle cx="10.4" cy="14" r="1.8" fill="#fff"/><rect x="14.6" y="4.6" width="4.4" height="3.4" fill="#ffd000" stroke="#000" stroke-width=".9"/><rect x="2" y="16" width="1.6" height="3" fill="#f00"/><path d="M16.8,0V3M13,0.8L14.6,3.6M20.6,0.8L19,3.6M22.6,3.6L20.4,5" stroke="#f00" stroke-width="1"/></g></g>
<rect x="747" y="81" width="1" height="28" fill="#8f8f8f"/><rect x="748" y="81" width="1" height="28" fill="#fff"/>
<g transform="translate(754.5,85)"><g shape-rendering="auto"><rect x="2.6" y="1.8" width="19" height="2" fill="#f00000"/><circle cx="2.8" cy="2.8" r="2.6" fill="#0000e8"/><circle cx="21.8" cy="2.8" r="2.6" fill="#0000e8"/><rect x="0.6" y="9.4" width="24" height="12.6" fill="url(#pYl)" stroke="#000" stroke-width="1.1"/><path d="M3,9.4V13M5.4,9.4V12M7.8,9.4V13M10.2,9.4V12M12.6,9.4V14M15,9.4V12M17.4,9.4V13M19.8,9.4V12M22.2,9.4V13" stroke="#000" stroke-width=".9"/><text x="10" y="20.6" font-family="Liberation Sans" font-weight="bold" font-size="7.6" fill="#000">1</text><text x="19" y="20.6" font-family="Liberation Sans" font-weight="bold" font-size="7.6" fill="#000">2</text></g></g>
<rect x="783" y="79" width="1" height="34" fill="#a0a0a0"/>
</svg>
<!--/ICONS-->
<!--LEFTPANEL-->
<!-- Cabinet Edit group -->
<div class="gb" style="left:2px;top:118px;width:146px;height:375px"></div>
<div class="gl" style="left:12px;top:113px">Cabinet Edit</div>
<div class="a" style="left:110px;top:124px;width:38px;height:13px;background:#c3c3c3"></div>
<svg class="a" style="left:110px;top:122px" width="38" height="18" viewBox="0 0 38 18"><path d="M2 8.4H26" stroke="#0000ff" stroke-width="3" fill="none"/><path d="M25.6 2.9L32.6 8.4L25.6 13.9Z" fill="#0000ff"/></svg>
<div class="t" style="left:20px;top:140px">Width: Angle-Front Width</div>
<div class="inp" style="left:36px;top:154px;width:60px;height:20px">13.97''</div>
<div class="t" style="left:20px;top:176px">Height:</div>
<div class="inp" style="left:36px;top:190px;width:60px;height:20px">42''</div>
<div class="t" style="left:20px;top:211px">Depth: Right Depth</div>
<div class="inp" style="left:36px;top:226px;width:60px;height:20px">12''</div>
<!-- lock -->
<div class="a" style="left:117px;top:173px;width:22px;height:24px;background:#e6e6e6;border:1px solid #adadad"></div>
<svg class="a" style="left:117px;top:173px" width="22" height="24" viewBox="0 0 22 24"><rect x="6" y="11" width="11" height="8" fill="#000"/><path d="M8.2 11V8.5a3.3 3.3 0 0 1 6.6 0V11" stroke="#000" stroke-width="1.7" fill="none"/></svg>
<!-- Explode -->
<div class="gb" style="left:5px;top:254px;width:140px;height:39px"></div>
<div class="gl" style="left:12px;top:249px;width:88px">Explode</div>
<div class="t" style="left:15px;top:263px">0%</div>
<div class="t" style="left:59px;top:263px">50%</div>
<div class="t" style="left:103px;top:263px">100%</div>
<div class="a" style="left:20px;top:282px;width:109px;height:4px;background:#e7eaea;border:1px solid #d6d6d6"></div>
<div class="a" style="left:19px;top:280px;width:4px;height:8px;background:#0078d7"></div>
<!-- 3-D dist -->
<div class="t" style="left:11px;top:298px">3-D Dist.</div>
<div class="inp" style="left:69px;top:296px;width:60px;height:20px;background:#f0f0f0"></div>
<div class="t" style="left:8px;top:322px">Move Incr.</div>
<div class="inp" style="left:69px;top:320px;width:60px;height:20px">0.5368''</div>
<!-- list box -->
<div class="a" style="left:6px;top:343px;width:137px;height:98px;background:#f0f0f0;border-top:2px solid #6d6d6d;border-left:2px solid #6d6d6d;border-right:2px solid #fff;border-bottom:2px solid #fff;box-shadow:inset 1px 1px 0 #a0a0a0"></div>
<!-- Enhanced view -->
<div class="a" style="left:15px;top:445px;width:120px;height:23px;background:#e9e9e9;border-top:1px solid #fff;border-left:1px solid #fff;border-right:2px solid #6d6d6d;border-bottom:2px solid #6d6d6d;box-shadow:inset -1px -1px 0 #a0a0a0"></div>
<div class="a" style="left:19px;top:449px;width:112px;height:15px;background:#e1e1e1;border:1px solid #8a8a8a;text-align:center;font-size:11px;line-height:13px;letter-spacing:-0.1px">Enhanced View</div>
<!-- combos -->
<div class="inp" style="left:23px;top:497px;width:105px;height:21px;line-height:18px;padding-left:3px">Reset View</div>
<div class="inp" style="left:23px;top:518px;width:105px;height:21px;line-height:18px;padding-left:3px">C-Plane Front</div>
<svg class="a" style="left:114px;top:504px" width="10" height="7" viewBox="0 0 10 7"><path d="M1 1.5L5 5.5L9 1.5" stroke="#505050" stroke-width="1.1" fill="none"/></svg>
<svg class="a" style="left:114px;top:525px" width="10" height="7" viewBox="0 0 10 7"><path d="M1 1.5L5 5.5L9 1.5" stroke="#505050" stroke-width="1.1" fill="none"/></svg>
<!-- Screen shade -->
<div class="gb" style="left:2px;top:545px;width:113px;height:32px"></div>
<div class="gl" style="left:12px;top:539px;width:88px">Screen Shade</div>
<div class="a" style="left:12px;top:561px;width:64px;height:3px;background:#e7eaea;border:1px solid #d6d6d6"></div>
<div class="a" style="left:11px;top:558px;width:4px;height:9px;background:#0078d7"></div>
<div class="a" style="left:84px;top:554px;width:24px;height:18px;border:1px solid #adadad;background:#e1e1e1"></div>
<div class="a" style="left:86px;top:556px;width:20px;height:14px;background:linear-gradient(#16161e,#2c2c3a 25%,#6a6a88 45%,#9a9a9a 60%,#d8d8d8 85%,#f4f4f4)"></div>
<div class="a" style="left:120px;top:553px;width:25px;height:19px;background:#e1e1e1;border:1px solid #8a8a8a;font-size:11px;line-height:17px;text-align:center;letter-spacing:-0.3px">CNC</div>
<!-- ellipse 1 -->
<svg class="a" style="left:0;top:115px" width="150" height="80" viewBox="0 115 150 80"><ellipse cx="67.5" cy="155.5" rx="56.5" ry="27" fill="none" stroke="#22a84a" stroke-width="5.5"/></svg>
<!--/LEFTPANEL-->

<!--CABINET-->
<svg class="a" style="left:152px;top:113px" width="652" height="851" viewBox="152 113 652 851">
<defs>
<filter id="gTop" color-interpolation-filters="sRGB" x="0" y="0" width="100%" height="100%" filterUnits="objectBoundingBox">
<feTurbulence type="fractalNoise" baseFrequency="0.008 0.24" numOctaves="3" seed="4" result="n"/>
<feColorMatrix in="n" type="matrix" values="0 0 0 0 0.66  0 0 0 0 0.40  0 0 0 0 0.26  1.3 0 0 0 -0.5" result="g"/>
<feComposite in="g" in2="SourceGraphic" operator="in" result="gi"/>
<feMerge><feMergeNode in="SourceGraphic"/><feMergeNode in="gi"/></feMerge>
</filter>
<filter id="gV" color-interpolation-filters="sRGB" x="0" y="0" width="100%" height="100%">
<feTurbulence type="fractalNoise" baseFrequency="0.16 0.008" numOctaves="3" seed="9" result="n"/>
<feColorMatrix in="n" type="matrix" values="0 0 0 0 0.40  0 0 0 0 0.26  0 0 0 0 0.16  0.9 0 0 0 -0.32" result="g"/>
<feComposite in="g" in2="SourceGraphic" operator="in" result="gi"/>
<feMerge><feMergeNode in="SourceGraphic"/><feMergeNode in="gi"/></feMerge>
</filter>
<filter id="gD" color-interpolation-filters="sRGB" x="0" y="0" width="100%" height="100%">
<feTurbulence type="fractalNoise" baseFrequency="0.05 0.012" numOctaves="3" seed="21" result="n"/>
<feColorMatrix in="n" type="matrix" values="0 0 0 0 0.66  0 0 0 0 0.42  0 0 0 0 0.29  1.2 0 0 0 -0.48" result="g"/>
<feComposite in="g" in2="SourceGraphic" operator="in" result="gi"/>
<feMerge><feMergeNode in="SourceGraphic"/><feMergeNode in="gi"/></feMerge>
</filter>
<linearGradient id="lTop" x1="0" y1="0" x2="1" y2="1"><stop offset="0" stop-color="#ca916a"/><stop offset="1" stop-color="#ce9770"/></linearGradient>
<linearGradient id="lL" x1="0" y1="0" x2="1" y2="0"><stop offset="0" stop-color="#886246"/><stop offset="1" stop-color="#8e684a"/></linearGradient>
<linearGradient id="lR" x1="0" y1="0" x2="1" y2="0"><stop offset="0" stop-color="#8f694b"/><stop offset="1" stop-color="#886246"/></linearGradient>
</defs>

<polygon points="250,510 391,645 643.4,647.8 788.6,515.6 737,818.5 628.4,918 628.4,924 617.7,932 413.8,930.5 404,921 403,915.6 298.7,814.3" fill="#8c664a"/>
<g filter="url(#gV)">
<polygon points="250,510 379,632.5 403,915.6 298.7,814.3" fill="url(#lL)"/>
<polygon points="788.6,515.6 737,818.5 628.4,918 657,636" fill="url(#lR)"/>
<polygon points="379,632.5 391,645 413.8,930.5 404,921 403,915.6" fill="#8e684b"/>
<polygon points="657,636 643.4,647.8 617.7,932 628.4,924 628.4,918" fill="#946d50"/>
</g>
<g filter="url(#gD)">
<polygon points="391,645 643.4,647.8 617.7,932 413.8,930.5" fill="#b38667"/>
<polygon points="412.6,667 621.5,669 600.5,937.5 430,935.5" fill="#b48768"/>
</g>
<g transform="rotate(-38 521 470)"><g filter="url(#gTop)">
<polygon transform="rotate(38 521 470)" points="521.6,300.2 775.7,515 782.8,509.8 788.6,515.6 657,636 643.4,647.8 391,645 379,632.5 250,510 256,504" fill="url(#lTop)"/>
</g></g>
<!-- light edge strips -->
<polygon points="250,510 256,504 262,509 390,631 379,632.8" fill="#d6a079" opacity=".55"/>
<polygon points="788.6,515.6 782.8,509.8 776,515 645,634 657,636" fill="#d6a079" opacity=".55"/>
<polygon points="379,632.8 403,633.2 639.4,634.8 657,636 643.4,647.8 391,645" fill="#d7a680"/>
<polygon points="412.6,655.3 621.5,657 621.5,669 412.6,667" fill="#d9a983"/>
<polygon points="391,645 643.4,647.8 643,657 621.5,657 412.6,655.3 391.5,652" fill="#a87a57" opacity=".45"/>

<!-- raised panel shading -->
<g>
<polygon points="453.5,687 579.5,688 572,921 462.5,921" fill="#b18262"/>
<polygon points="457,691 468,692 475,917 466,919" fill="#a27656"/><path d="M464.5,692L471.5,917" stroke="#7c573c" stroke-width="1.6"/>
<polygon points="565,693 575.5,691 570,919 560,917" fill="#a87b5a"/><path d="M566.5,694L561.8,917" stroke="#7c573c" stroke-width="1.6"/>
<polygon points="469,692 563,693 551,699.5 483.7,699" fill="#dcae88"/>
<polygon points="474.8,917 557.6,917 561,921 470,921" fill="#d6a57e"/>
<polygon points="470,921 561,921 561,924.5 470,924.5" fill="#7d5a40"/>
<polygon points="473,700 483.7,699 484.8,911 477,914" fill="#aa7c5c"/><path d="M474.5,700L479,912" stroke="#84603f" stroke-width="1.5"/>
<polygon points="551,699.5 560,700 556.5,914 546.4,911" fill="#ac7e5e"/><path d="M558.6,700L555,912" stroke="#84603f" stroke-width="1.5"/>
</g>
<g filter="url(#gD)"><polygon points="483.7,699 551,699.5 546.4,911 484.8,911" fill="#b48768"/></g>

<!-- pink lines -->
<g fill="none" stroke="#ff00aa" stroke-width="1" shape-rendering="crispEdges">
<path d="M521.6,300.2L256,504L250,510M521.6,300.2L775.7,515L782.8,509.8L788.6,515.6" stroke-dasharray="3 2"/>
<path d="M250,510L391,645M788.6,515.6L643.4,647.8"/>
<path d="M256,504L262,509.5M776,515L782.8,509.8"/>
<path d="M262.8,510.1L396,634M771.8,519.5L639.4,635" stroke-dasharray="7 5"/>
<path d="M250,510L298.7,814.3M788.6,515.6L737,818.5" stroke-dasharray="6 3"/>
<path d="M298.7,814.3L403,915.6L404,921L413.8,930.5L430,930.8L430,935.5L600.5,937.5L601,932L617.7,932L628.4,924L628.4,918L737,818.5"/>
<path d="M378.4,633L403,915.6M657,636L628.4,918" stroke-dasharray="7 4"/>
<path d="M391,645L413.8,930.5M643.4,647.8L617.7,932" stroke-dasharray="9 2 2 2"/>
<path d="M412.6,655L430,935.5M621.5,657L600.5,937.5" stroke-dasharray="9 2 2 2"/>
<path d="M403,633.4H442M488,634H520M560,634.5H639.4"/>
<path d="M391,645L643.4,647.8"/>
<path d="M418.4,633V655M615.5,634.8V657"/>
<path d="M412.6,655.3L621.5,657M412.6,667L621.5,669"/>
<path d="M453.5,655.5H462.5V661M571,657H579.5V662.5" />
<path d="M462.5,661V686M571,662V686"/>
<path d="M483.7,699L551,699.5L546.4,911M483.7,699L484.8,911" />
<path d="M470.3,924V935M560.5,924V936"/>
</g>
<g fill="none" stroke="#ff00aa">
<path d="M453.5,689L579.5,690" stroke-width="4.5"/>
<path d="M455,689L464,921M578,690L571.5,921" stroke-width="3"/>
<path d="M470.5,693L476,915M562.5,694L558.5,915" stroke-width="3.4"/>
<path d="M474.8,915.5H557.6" stroke-width="3"/>
<path d="M463,921H572" stroke-width="1.4"/>
<path d="M460,700L468,905M568,700L563,905" stroke-width="1" stroke-dasharray="14 3"/>
</g>
<!-- handle -->
<polygon points="581.8,908.5 586.2,908.5 586.2,947 580.6,947" fill="#f1f1f1"/>
<polygon points="581.8,908.5 584,908.5 582.6,928 580.9,934" fill="#111"/>
<!-- X axis marker -->
<path d="M152,809.8L162,814.5L152,818.8Z" fill="#f00"/>
<path d="M152,815.5L159,815.8L152,818.8Z" fill="#b80000"/>
<path d="M161,802.5L182.4,826.8M181.8,802.5L160.4,826.8" stroke="#ff5252" stroke-width="2.8" fill="none"/>
</svg>
<!--/CABINET-->
<!--POPUP-->
<div class="a" style="left:147px;top:123px;width:158px;height:279px;background:#f0f0f0;border-left:2px solid #fbfbfb;border-top:1px solid #fbfbfb;box-shadow:-1px 0 0 #e3e3e3"></div>
<!-- width group -->
<div class="gb" style="left:155px;top:132px;width:143px;height:97px"></div>
<div class="gb" style="left:155px;top:228px;width:143px;height:51px"></div>
<div class="gl" style="left:162px;top:126px">Width</div>
<div class="rb" style="left:162px;top:143px"></div><div class="t" style="left:178px;top:143px">Right Front</div>
<div class="rb" style="left:162px;top:159px"></div><div class="t" style="left:178px;top:159px">Left Front</div>
<div class="rb" style="left:162px;top:175px"></div><div class="t" style="left:178px;top:175px">Right Back</div>
<div class="rb" style="left:162px;top:192px"></div><div class="t" style="left:178px;top:192px">Left Back</div>
<div class="rb on" style="left:162px;top:208px"></div><div class="t" style="left:178px;top:208px">Front Width</div>
<div class="q" style="left:268px;top:175px">?</div>
<div class="rb" style="left:164px;top:239px"></div><div class="t" style="left:180px;top:239px">Center of Angle</div>
<div class="rb" style="left:164px;top:255px"></div><div class="t" style="left:180px;top:255px">Left Back Flush</div>
<div class="q" style="left:270px;top:247px">?</div>
<!-- depth group -->
<div class="gb" style="left:155px;top:294px;width:143px;height:50px"></div>
<div class="gb" style="left:155px;top:343px;width:143px;height:49px"></div>
<div class="gl" style="left:162px;top:288px">Depth</div>
<div class="rb on" style="left:162px;top:305px"></div><div class="t" style="left:178px;top:305px">Right</div>
<div class="rb" style="left:162px;top:322px"></div><div class="t" style="left:178px;top:322px">Left</div>
<div class="q" style="left:268px;top:314px">?</div>
<div class="rb" style="left:162px;top:354px"></div><div class="t" style="left:178px;top:354px">Center of Angle</div>
<div class="rb" style="left:162px;top:370px"></div><div class="t" style="left:178px;top:370px">Left Back Flush</div>
<div class="q" style="left:268px;top:362px">?</div>
<!-- ellipse 2 -->
<svg class="a" style="left:130px;top:195px" width="160" height="40" viewBox="130 195 160 40"><ellipse cx="207.4" cy="216.2" rx="68.7" ry="12.7" fill="none" stroke="#22a84a" stroke-width="5.5"/></svg>
<!--/POPUP-->

</body></html>
